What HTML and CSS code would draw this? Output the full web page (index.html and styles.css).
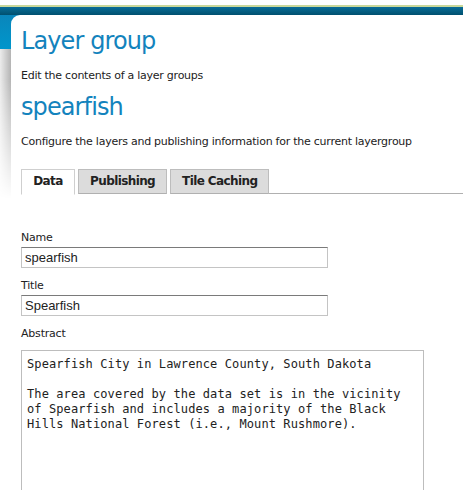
FILE: index.html
```html
<!DOCTYPE html>
<html>
<head>
<meta charset="utf-8">
<link rel="stylesheet" href="styles.css">
</head>
<body>
<div class="header">
  <div class="stripe"></div>
  <div class="bar"></div>
  <div class="band"></div>
</div>
<div class="page">
  <div class="panel">
    <h1 class="title">Layer group</h1>
    <p class="desc">Edit the contents of a layer groups</p>
    <h2 class="subtitle">spearfish</h2>
    <p class="desc desc2">Configure the layers and publishing information for the current layergroup</p>
    <div class="tabs">
      <div class="tab active">Data</div>
      <div class="tab">Publishing</div>
      <div class="tab">Tile Caching</div>
      <div class="tab-rest"></div>
    </div>
    <form class="form">
      <label class="label">Name</label>
      <input class="field" type="text" value="spearfish">
      <label class="label">Title</label>
      <input class="field" type="text" value="Spearfish">
      <label class="label">Abstract</label>
      <textarea class="area">Spearfish City in Lawrence County, South Dakota

The area covered by the data set is in the vicinity
of Spearfish and includes a majority of the Black
Hills National Forest (i.e., Mount Rushmore).</textarea>
    </form>
  </div>
</div>
</body>
</html>
```
FILE: styles.css
```css
html, body {
  margin: 0;
  padding: 0;
  background: #fff;
  overflow: hidden;
  height: 490px;
}
body {
  font-family: "DejaVu Sans", Verdana, sans-serif;
  color: #222;
}
.header {
  padding-top: 5px;
}
.stripe {
  height: 2px;
  background: #c9d89a;
}
.bar {
  height: 8px;
  background: linear-gradient(#0a6d97, #00506f);
}
.band {
  height: 34px;
  background: linear-gradient(#0a86bb, #0096cc);
}
.page {
  position: relative;
  margin-top: -34px;
  padding-left: 11px;
}
.page::before {
  content: "";
  position: absolute;
  left: 0;
  top: 34px;
  width: 11px;
  height: 150px;
  background: linear-gradient(to right, #ececec, #b4b4b4);
  -webkit-mask-image: linear-gradient(#000 20%, transparent);
  mask-image: linear-gradient(#000 20%, transparent);
}
.panel {
  position: relative;
  background: #fff;
  border-top-left-radius: 9px;
  padding: 11px 0 0 10px;
  height: 480px;
}
.title {
  margin: 0;
  font-weight: normal;
  font-size: 24px;
  line-height: 30px;
  color: #1383bd;
  letter-spacing: -0.9px;
}
.desc {
  margin: 13px 0 0;
  font-size: 11px;
  line-height: 14px;
  color: #222;
  letter-spacing: -0.25px;
}
.subtitle {
  margin: 9px 0 0;
  font-weight: normal;
  font-size: 24px;
  line-height: 30px;
  color: #1383bd;
  letter-spacing: -0.9px;
}
.desc2 {
  margin-top: 13px;
}
.tabs {
  display: flex;
  margin-top: 20px;
  gap: 3px;
  align-items: flex-end;
}
.tab {
  height: 25px;
  box-sizing: border-box;
  border: 1px solid #bdbdbd;
  border-bottom: 1px solid #b0b0b0;
  background: #dcdcdc;
  font-weight: bold;
  font-size: 12px;
  line-height: 23px;
  padding: 0 11px;
  color: #222;
  letter-spacing: -0.6px;
}
.tab.active {
  background: #fff;
  border-color: #cfcfcf;
  border-bottom-color: #fff;
  height: 26px;
  margin-bottom: -1px;
  width: 54px;
  text-align: center;
  padding: 0;
}
.tab-rest {
  flex: 1;
  border-bottom: 1px solid #b0b0b0;
  margin-left: -3px;
}
.form {
  display: flex;
  flex-direction: column;
  align-items: flex-start;
  margin-top: 37px;
}
.label {
  font-size: 11px;
  line-height: 14px;
  color: #222;
  letter-spacing: -0.2px;
}
.field {
  margin: 2px 0 11px;
  width: 307px;
  height: 21px;
  box-sizing: border-box;
  border: 1px solid #c4c4c4;
  border-top-color: #7a7a7a;
  padding: 0 3px;
  font-family: "Liberation Sans", Arial, sans-serif;
  font-size: 13px;
  color: #222;
}
.area {
  margin-top: 9px;
  width: 403px;
  height: 160px;
  box-sizing: border-box;
  border: 1px solid #bdbdbd;
  padding: 6px 5px;
  font-family: "DejaVu Sans Mono", monospace;
  font-size: 12px;
  line-height: 15px;
  letter-spacing: 0.1px;
  color: #222;
  resize: none;
}
```
